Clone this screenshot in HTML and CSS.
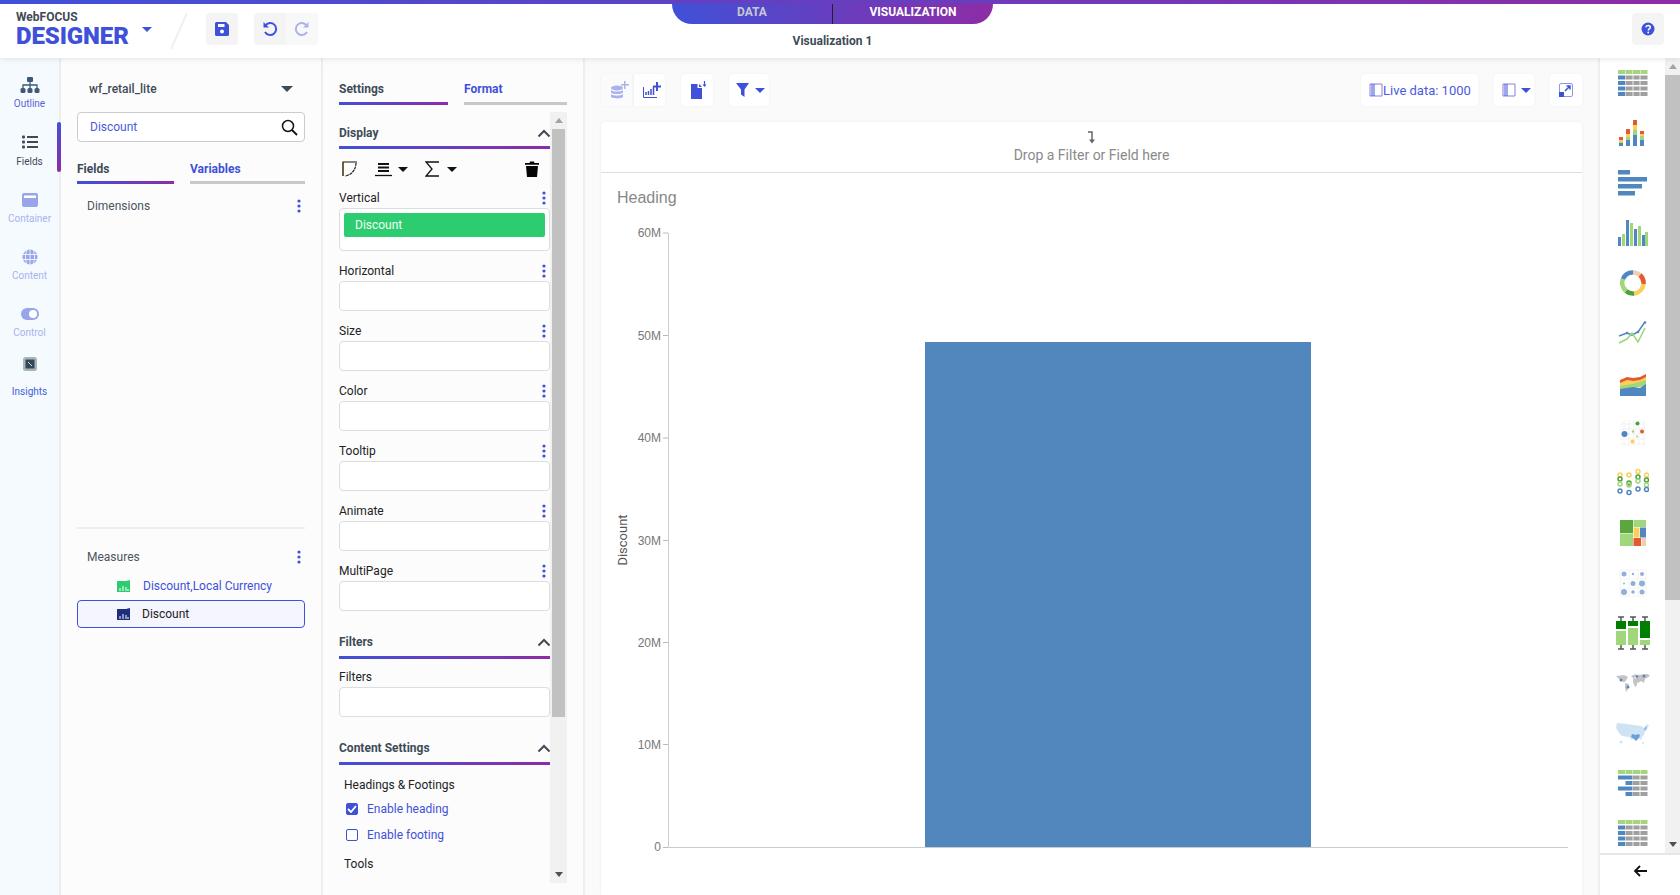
FILE: index.html
```html
<!DOCTYPE html>
<html lang="en">
<head>
<meta charset="utf-8">
<title>WebFOCUS Designer</title>
<link rel="stylesheet" href="styles.css">
</head>
<body>
<svg class="defs" width="0" height="0" aria-hidden="true">
  <defs>
    <symbol id="dots" viewBox="0 0 4 14"><circle cx="2" cy="2" r="1.6"/><circle cx="2" cy="7" r="1.6"/><circle cx="2" cy="12" r="1.6"/></symbol>
    <symbol id="chev" viewBox="0 0 14 9"><path d="M1.5 7.5 7 2l5.500 5.500" fill="none" stroke="#3e4b57" stroke-width="2"/></symbol>
    <symbol id="dropbar" viewBox="0 0 14 14"><path d="M1 1h12v12H1z" fill="none" stroke="#8d7be0"/><path d="M3 1v12M5 1v12" stroke="#3f51d8" stroke-width="1"/></symbol>
  </defs>
</svg>
<div class="app">
  <header class="header">
    <div class="header-line"></div>
    <div class="header-row">
      <div class="header-left">
        <div class="logo">
          <div class="logo-small">WebFOCUS</div>
          <div class="logo-big">DESIGNER</div>
        </div>
        <span class="caret caret-blue logo-caret"></span>
        <svg class="slash" width="18" height="38" viewBox="0 0 18 38"><path d="M17 1 1 37" stroke="#f0f0f0" stroke-width="2"/></svg>
        <div class="btn btn-grey">
          <svg width="14" height="14" viewBox="0 0 14 14"><path d="M1.500 0H11l3 3v9.500a1.500 1.500 0 0 1-1.500 1.500h-11A1.500 1.500 0 0 1 0 12.500v-11A1.500 1.500 0 0 1 1.500 0z" fill="#3f51d8"/><path d="M3 2h6.500v3H3z" fill="#fff"/><circle cx="7" cy="9.500" r="2" fill="#fff"/></svg>
        </div>
        <div class="btn-group">
          <div class="btn btn-grey">
            <svg width="16" height="16" viewBox="0 0 16 16"><path d="M3.300 4.500A6 6 0 1 1 3 11" fill="none" stroke="#3f51d8" stroke-width="2"/><path d="M1.500 1v5.500H7z" fill="#3f51d8"/></svg>
          </div>
          <div class="btn btn-lite">
            <svg width="16" height="16" viewBox="0 0 16 16"><path d="M12.700 4.500A6 6 0 1 0 13 11" fill="none" stroke="#a9b2ec" stroke-width="2"/><path d="M14.500 1v5.500H9z" fill="#a9b2ec"/></svg>
          </div>
        </div>
      </div>
      <div class="header-center">
        <div class="mode-tabs">
          <div class="mode-tab mode-off">DATA</div>
          <div class="mode-tab mode-on">VISUALIZATION</div>
        </div>
        <div class="doc-title">Visualization 1</div>
      </div>
      <div class="header-right">
        <div class="btn btn-grey">
          <svg width="14" height="14" viewBox="0 0 14 14"><circle cx="7" cy="7" r="6.500" fill="#3f51d8"/><path d="M4.800 5.300C5 3.900 6 3.400 7.100 3.400c1.300 0 2.200.8 2.200 1.900 0 1.700-2 1.600-2 3.100" fill="none" stroke="#fff" stroke-width="1.500"/><circle cx="7.200" cy="10.500" r=".9" fill="#fff"/></svg>
        </div>
      </div>
    </div>
  </header>

  <div class="body-row">
    <nav class="rail">
      <div class="rail-item rail-outline">
        <svg class="rail-icon" width="20" height="18" viewBox="0 0 20 18"><g fill="#3f5a78"><rect x="7" y="0" width="6" height="5" rx="1"/><rect x="0.500" y="11" width="5" height="5" rx="1.500"/><rect x="7.500" y="11" width="5" height="5" rx="1.500"/><rect x="14.500" y="11" width="5" height="5" rx="1.500"/></g><path d="M10 5v6M3 11V8h14v3" fill="none" stroke="#3f5a78" stroke-width="1.300"/></svg>
        <span class="rail-label rail-label-blue">Outline</span>
      </div>
      <div class="rail-item rail-active">
        <svg class="rail-icon" width="16" height="14" viewBox="0 0 16 14"><g fill="#3e4b57"><rect x="0" y="0.500" width="3" height="3" rx="1"/><rect x="0" y="5.500" width="3" height="3" rx="1"/><rect x="0" y="10.500" width="3" height="3" rx="1"/><rect x="5" y="1" width="11" height="2"/><rect x="5" y="6" width="11" height="2"/><rect x="5" y="11" width="11" height="2"/></g></svg>
        <span class="rail-label">Fields</span>
      </div>
      <div class="rail-item rail-dim">
        <svg class="rail-icon" width="16" height="14" viewBox="0 0 16 14"><rect width="16" height="14" rx="2" fill="#98a5ea"/><rect x="2" y="2.500" width="12" height="2.500" fill="#fff"/></svg>
        <span class="rail-label">Container</span>
      </div>
      <div class="rail-item rail-dim">
        <svg class="rail-icon" width="16" height="16" viewBox="0 0 16 16"><circle cx="8" cy="8" r="7.500" fill="#98a5ea"/><path d="M0 5.500h16M0 10.500h16M8 0v16M5 1c-2 4-2 10 0 14M11 1c2 4 2 10 0 14" fill="none" stroke="#fff" stroke-width=".8"/></svg>
        <span class="rail-label">Content</span>
      </div>
      <div class="rail-item rail-dim">
        <svg class="rail-icon" width="18" height="12" viewBox="0 0 18 12"><rect width="18" height="12" rx="6" fill="#98a5ea"/><circle cx="12" cy="6" r="4" fill="#fff"/></svg>
        <span class="rail-label">Control</span>
      </div>
      <div class="rail-item rail-insights">
        <svg class="rail-icon" width="14" height="14" viewBox="0 0 14 14"><rect width="14" height="14" rx="2.500" fill="#a9b6b8"/><rect x="2.500" y="2.500" width="9" height="9" fill="#34475a"/><path d="M5 5l4 4" stroke="#d5dde0"/></svg>
        <span class="rail-label rail-label-link">Insights</span>
      </div>
    </nav>

    <section class="fields-panel">
      <div class="source-row">
        <span class="source-name">wf_retail_lite</span>
        <span class="caret caret-dark caret-lg"></span>
      </div>
      <div class="search-box">
        <span class="search-text">Discount</span>
        <svg width="17" height="17" viewBox="0 0 17 17"><circle cx="7" cy="7" r="5.500" fill="none" stroke="#111" stroke-width="1.500"/><path d="M11 11l5 5" stroke="#111" stroke-width="1.800"/></svg>
      </div>
      <div class="tabs tabs-fields">
        <div class="tab tab-on">Fields</div>
        <div class="tab tab-off">Variables</div>
      </div>
      <div class="group-head group-dim">
        <span>Dimensions</span>
        <svg class="dots"><use href="#dots"/></svg>
      </div>
      <div class="group-spacer"></div>
      <div class="group-head group-meas">
        <span>Measures</span>
        <svg class="dots"><use href="#dots"/></svg>
      </div>
      <div class="meas-row">
        <svg width="13" height="12" viewBox="0 0 13 12"><path d="M0 1h9l4-1v12H0z" fill="#2ecc71"/><path d="M3 11V8M6 11V6M9 11V7M11 11V9" stroke="#fff"/></svg>
        <span class="meas-name">Discount,Local Currency</span>
      </div>
      <div class="meas-row meas-selected">
        <svg width="13" height="12" viewBox="0 0 13 12"><path d="M0 1h9l4-1v12H0z" fill="#1e2f7d"/><path d="M3 11V8M6 11V6M9 11V7M11 11V9" stroke="#fff"/></svg>
        <span class="meas-name">Discount</span>
      </div>
    </section>

    <section class="settings-panel">
      <div class="tabs tabs-settings">
        <div class="tab tab-on">Settings</div>
        <div class="tab tab-off">Format</div>
      </div>
      <div class="settings-scroll">
        <div class="settings-content">
          <div class="section-head section-first"><span>Display</span><svg class="chev"><use href="#chev"/></svg></div>
          <div class="display-tools">
            <svg class="tool-curve" width="16" height="16" viewBox="0 0 16 16"><path d="M1 15V1h14" fill="none" stroke="#111" stroke-width="1.200"/><path d="M14 2c0 6-4 12-11 13" fill="none" stroke="#222" stroke-width="1.200" stroke-dasharray="3 .6"/><path d="M1 1v14" stroke="#7a4a1a"/></svg>
            <span class="tool-gap"></span>
            <svg width="17" height="15" viewBox="0 0 17 15"><path d="M3 1h11v2H3zM3 4.500h11v2H3zM3 8h11v2H3z" fill="#111"/><path d="M0 13.500h17" stroke="#111" stroke-width="1.300"/></svg>
            <span class="caret caret-black"></span>
            <span class="tool-gap"></span>
            <svg width="14" height="16" viewBox="0 0 14 16"><path d="M14 1H1l6 7-6 7h13" fill="none" stroke="#111" stroke-width="1.300"/></svg>
            <span class="caret caret-black caret-wide"></span>
            <span class="tool-fill"></span>
            <svg class="trash" width="14" height="16" viewBox="0 0 14 16"><path d="M0 2h4.500l.6-1.500h3.800L9.500 2H14v1.800H0zM1 5h12l-1 11H2z" fill="#050505"/></svg>
          </div>
          <div class="field">
            <div class="field-head"><span>Vertical</span><svg class="dots"><use href="#dots"/></svg></div>
            <div class="drop-box drop-filled"><div class="chip">Discount</div></div>
          </div>
          <div class="field"><div class="field-head"><span>Horizontal</span><svg class="dots"><use href="#dots"/></svg></div><div class="drop-box"></div></div>
          <div class="field"><div class="field-head"><span>Size</span><svg class="dots"><use href="#dots"/></svg></div><div class="drop-box"></div></div>
          <div class="field"><div class="field-head"><span>Color</span><svg class="dots"><use href="#dots"/></svg></div><div class="drop-box"></div></div>
          <div class="field"><div class="field-head"><span>Tooltip</span><svg class="dots"><use href="#dots"/></svg></div><div class="drop-box"></div></div>
          <div class="field"><div class="field-head"><span>Animate</span><svg class="dots"><use href="#dots"/></svg></div><div class="drop-box"></div></div>
          <div class="field"><div class="field-head"><span>MultiPage</span><svg class="dots"><use href="#dots"/></svg></div><div class="drop-box"></div></div>
          <div class="section-head section-filters"><span>Filters</span><svg class="chev"><use href="#chev"/></svg></div>
          <div class="field field-filters"><div class="field-head"><span>Filters</span></div><div class="drop-box"></div></div>
          <div class="section-head section-content"><span>Content Settings</span><svg class="chev"><use href="#chev"/></svg></div>
          <div class="sub-title sub-first">Headings &amp; Footings</div>
          <div class="check-row">
            <span class="check check-on"><svg width="10" height="8" viewBox="0 0 10 8"><path d="M1 4l3 3 5-6" fill="none" stroke="#fff" stroke-width="1.800"/></svg></span>
            <span>Enable heading</span>
          </div>
          <div class="check-row">
            <span class="check"></span>
            <span>Enable footing</span>
          </div>
          <div class="sub-title sub-tools">Tools</div>
        </div>
        <div class="scrollbar scrollbar-settings">
          <span class="sb-arrow sb-up"></span>
          <span class="sb-thumb"></span>
          <span class="sb-fill"></span>
          <span class="sb-arrow sb-down"></span>
        </div>
      </div>
    </section>

    <main class="main">
      <div class="toolbar">
        <div class="tool-group">
          <div class="tbtn tbtn-muted tbtn-shift-more">
            <svg width="18" height="18" viewBox="0 0 18 18"><g fill="#a9b2ec"><ellipse cx="6" cy="7" rx="6" ry="2.500"/><path d="M0 9c2 2 10 2 12 0v2.500c-2 2-10 2-12 0zM0 13c2 2 10 2 12 0v2.500C12 18 0 18 0 15.500z"/><path d="M13 0h1.500v3H18v1.500h-3.500V8H13V4.500H10V3h3z"/></g></svg>
          </div>
          <div class="tbtn tbtn-shift">
            <svg width="18" height="16" viewBox="0 0 18 16"><path d="M.5 5v10.500H14" fill="none" stroke="#3f51d8"/><path d="M3 13V10M5.500 13V9M8 13V7M10.500 13V5" stroke="#3f51d8" stroke-width="1.500"/><path d="M13 0h2v3.500h3v2h-3V9h-2V5.500h-3v-2h3z" fill="#3f51d8"/></svg>
          </div>
        </div>
        <div class="tbtn tbtn-shift">
          <svg width="16" height="18" viewBox="0 0 16 18"><path d="M0 3h6.500v4H11v11H0z" fill="#3f51d8"/><path d="M8 3l3 3H8z" fill="#3f51d8"/><path d="M13.500 0v4" stroke="#3f51d8" stroke-width="1.200"/><path d="M11.500 3.500h4l-2 2.500z" fill="#3f51d8"/></svg>
        </div>
        <div class="tbtn tbtn-wide">
          <svg width="14" height="14" viewBox="0 0 14 14"><path d="M0 0h13L8.500 6.500V14L5 11.500v-5z" fill="#3f51d8"/></svg>
          <span class="caret caret-blue"></span>
        </div>
        <div class="tool-fill"></div>
        <div class="tbtn tbtn-live">
          <svg width="14" height="14"><use href="#dropbar"/></svg>
          <span>Live data: 1000</span>
        </div>
        <div class="tbtn tbtn-wide tbtn-layout">
          <svg width="14" height="14"><use href="#dropbar"/></svg>
          <span class="caret caret-blue"></span>
        </div>
        <div class="tbtn">
          <svg width="14" height="14" viewBox="0 0 14 14"><rect x=".5" y=".5" width="13" height="13" rx="1.500" fill="none" stroke="#8d97e6"/><rect y="9" width="5" height="5" fill="#3f51d8"/><path d="M6 8l5-5M7.500 3H11v3.500" fill="none" stroke="#3f51d8" stroke-width="1.500"/></svg>
        </div>
      </div>
      <div class="card">
        <div class="drop-zone">
          <svg width="8" height="13" viewBox="0 0 8 13"><path d="M0 1h4v10" fill="none" stroke="#666" stroke-width="1.500"/><path d="M1 8.500h6L4 12.500z" fill="#666"/></svg>
          <span>Drop a Filter or Field here</span>
        </div>
        <svg class="chart" width="980" height="723" viewBox="0 0 980 723">
          <text class="chart-heading" x="16" y="30">Heading</text>
          <g class="ticks">
            <path d="M62 60h5M62 162.500h5M62 265h5M62 367.500h5M62 469.500h5M62 571.500h5M62 674.500h5" stroke="#bbb"/>
            <path d="M67.500 60v614.500H967" fill="none" stroke="#ccc"/>
          </g>
          <rect x="324" y="169" width="386" height="505" fill="#5187bd"/>
          <g class="chart-tick">
            <text x="60" y="64">60M</text>
            <text x="60" y="167">50M</text>
            <text x="60" y="269">40M</text>
            <text x="60" y="372">30M</text>
            <text x="60" y="474">20M</text>
            <text x="60" y="576">10M</text>
            <text x="60" y="678">0</text>
          </g>
          <text class="chart-axis" transform="translate(26 367) rotate(-90)">Discount</text>
        </svg>
      </div>
    </main>

    <aside class="types">
      <div class="types-top">
        <div class="types-list">
          <div class="type"><svg width="30" height="26" viewBox="0 0 30 26"><g fill="#a5d67f"><rect width="7" height="4"/><rect x="7.500" width="7" height="4"/><rect x="15" width="7" height="4"/><rect x="22.500" width="7" height="4"/></g><g fill="#5187c0"><rect y="5.500" width="7" height="4"/><rect y="11" width="7" height="4"/><rect y="16.500" width="7" height="4"/><rect y="22" width="7" height="4"/></g><g fill="#a0a0a0"><rect x="7.500" y="5.500" width="22" height="4"/><rect x="7.500" y="11" width="22" height="4"/><rect x="7.500" y="16.500" width="22" height="4"/><rect x="7.500" y="22" width="22" height="4"/></g><path d="M15 5v21M22 5v21" stroke="#fff" stroke-width=".8"/></svg></div>
          <div class="type"><svg width="28" height="26" viewBox="0 0 28 26"><path d="M0 17h4v3H0zM7 9h4v5H7zM14 0h4v5h-4zM21 11h4v3h-4z" fill="#e35a30"/><path d="M0 20h4v2H0zM7 14h4v3H7zM14 5h4v5h-4zM21 14h4v2h-4z" fill="#fbcf5b"/><path d="M0 22h4v1H0zM7 17h4v3H7zM14 10h4v5h-4zM21 16h4v4h-4z" fill="#9fd77a"/><path d="M0 23h4v3H0zM7 20h4v6H7zM14 15h4v11h-4zM21 20h4v6h-4z" fill="#5187c0"/></svg></div>
          <div class="type"><svg width="30" height="26" viewBox="0 0 30 26"><g fill="#5187c0"><rect x="0" y="0" width="12" height="4.500"/><rect x="0" y="7" width="29" height="4.500"/><rect x="0" y="14" width="24" height="4.500"/><rect x="0" y="21" width="17" height="4.500"/></g></svg></div>
          <div class="type"><svg width="30" height="26" viewBox="0 0 30 26"><g fill="#5187c0"><rect x="0" y="17" width="3" height="9"/><rect x="8" y="0" width="3" height="26"/><rect x="16" y="9" width="3" height="17"/><rect x="24" y="15" width="3" height="11"/></g><g fill="#9fd77a"><rect x="4" y="14" width="3" height="12"/><rect x="12" y="3" width="3" height="23"/><rect x="20" y="6" width="3" height="20"/><rect x="27" y="12" width="3" height="14"/></g></svg></div>
          <div class="type"><svg width="26" height="26" viewBox="0 0 26 26"><g fill="none" stroke-width="4.500"><path d="M13 2.500A10.500 10.500 0 0 1 20 5" stroke="#eecfae"/><path d="M20 5A10.500 10.500 0 0 1 23.500 14" stroke="#e35a30"/><path d="M23.500 14A10.500 10.500 0 0 1 14 23.500" stroke="#fbcf5b"/><path d="M14 23.500A10.500 10.500 0 0 1 6 21" stroke="#4ea03f"/><path d="M6 21A10.500 10.500 0 0 1 3 9" stroke="#9fd77a"/><path d="M3 9A10.500 10.500 0 0 1 13 2.500" stroke="#5187c0"/></g></svg></div>
          <div class="type"><svg width="30" height="24" viewBox="0 0 30 24"><path d="M1 15 9 12l5 2 6-3 7-10" fill="none" stroke="#5187c0" stroke-width="1.600"/><path d="M1 22 9 18l5-6 6 9 7-14" fill="none" stroke="#9fd77a" stroke-width="1.600"/><g fill="#5187c0"><circle cx="9" cy="12" r="1.300"/><circle cx="20" cy="11" r="1.300"/><circle cx="27" cy="1.500" r="1.300"/></g></svg></div>
          <div class="type type-area"><svg width="28" height="22" viewBox="0 0 28 22"><path d="M1 6 8 3l6 1 7-1 6-3v7L1 10z" fill="#e35a30"/><path d="M1 9 8 6l6 1 7-1 6-3v6L1 13z" fill="#fbcf5b"/><path d="M1 12 14 10l13-4v6L1 16z" fill="#9fd77a"/><path d="M1 15l13-2 7 1 6-4v12H1z" fill="#5187c0"/></svg></div>
          <div class="type"><svg width="28" height="28" viewBox="0 0 28 28"><path d="M1 5h26M1 10h26M1 15h26M1 20h26M1 25h26M5 1v26M10 1v26M15 1v26M20 1v26M25 1v26" stroke="#f1f1f1"/><circle cx="5.500" cy="15" r="3" fill="#5187c0"/><circle cx="18.500" cy="4.500" r="2" fill="#4ea03f"/><circle cx="23" cy="12.500" r="2" fill="#e35a30"/><circle cx="14" cy="12.500" r="1.300" fill="#9fd77a"/><circle cx="18" cy="17.500" r="1.200" fill="#f0c8a0"/><circle cx="13.500" cy="22.500" r="2" fill="#fbcf5b"/></svg></div>
          <div class="type"><svg width="32" height="28" viewBox="0 0 32 28"><g fill="none" stroke-width="1.500"><g stroke="#fbcf5b"><circle cx="3" cy="6" r="2"/><circle cx="12" cy="6" r="2"/><circle cx="21" cy="2.500" r="2"/><circle cx="29.500" cy="6" r="2"/></g><g stroke="#4ea03f"><circle cx="3" cy="10" r="2"/><circle cx="12" cy="14" r="2"/><circle cx="21" cy="8" r="2"/><circle cx="29.500" cy="11" r="2"/></g><g stroke="#9fd77a"><circle cx="3" cy="15" r="2"/><circle cx="12" cy="16" r="2"/><circle cx="21" cy="12" r="2"/><circle cx="29.500" cy="16" r="2"/></g><g stroke="#5187c0"><circle cx="3" cy="22" r="2"/><circle cx="12" cy="23.500" r="2"/><circle cx="21" cy="20" r="2"/><circle cx="29.500" cy="20.500" r="2"/></g></g></svg></div>
          <div class="type"><svg width="26" height="26" viewBox="0 0 26 26"><rect x="0" y="0" width="13" height="13" fill="#5aa63f"/><rect x="13.500" y="0" width="12.500" height="7" fill="#9fd77a"/><rect x="0" y="13.500" width="13" height="12.500" fill="#9fd77a"/><rect x="13.500" y="7.500" width="6" height="10" fill="#fbcf5b"/><rect x="20" y="7.500" width="6" height="10" fill="#5187c0"/><rect x="13.500" y="18" width="7.500" height="8" fill="#e35a30"/><rect x="21.500" y="18" width="4.500" height="8" fill="#eecfae"/></svg></div>
          <div class="type"><svg width="28" height="28" viewBox="0 0 28 28"><path d="M1 1h26v26H1zM1 10h26M1 19h26M10 1v26M19 1v26" fill="none" stroke="#f3f3f3"/><g fill="#8fb0d8"><circle cx="5" cy="5" r="2.500"/><circle cx="14" cy="5" r="1.200"/><circle cx="23" cy="5" r="2"/><circle cx="5" cy="14.500" r="1"/><circle cx="14" cy="14.500" r="2.500"/><circle cx="23" cy="14.500" r="3"/><circle cx="5" cy="23" r="3"/><circle cx="14" cy="23" r="1.800"/><circle cx="23" cy="23" r="2.500"/></g></svg></div>
          <div class="type"><svg width="34" height="34" viewBox="0 0 34 34"><g fill="#008000"><rect x="0" y="5" width="10" height="8"/><rect x="12" y="5" width="10" height="5"/><rect x="24" y="5" width="10" height="17"/></g><g fill="#9fd77a"><rect x="0" y="15" width="10" height="14"/><rect x="12" y="12" width="10" height="17"/><rect x="24" y="24" width="10" height="5"/></g><path d="M2 1h6M5 1v4M14 1h6M17 1v4M26 1h6M29 1v4M2 33h6M5 29v4M14 33h6M17 29v4M26 33h6M29 29v4" stroke="#555" stroke-width="1.500"/></svg></div>
          <div class="type"><svg width="34" height="20" viewBox="0 0 34 20"><path d="M0 3l8-1 4 2-3 5-2 0-4-3zM9 10l4 1-1 5-2 3-1-4zM15 3l5-2 1 3-4 1zM17 5l5 1-1 6-2 2-2-5zM20 2l12-1 2 2-5 3-1 4-3-2-3 2-2-5z" fill="#c4c4c4"/><g fill="#5187c0"><circle cx="5" cy="7" r="1.500"/><circle cx="12" cy="14" r="1.500"/><circle cx="21" cy="3.500" r="1.200"/><circle cx="28" cy="3" r="1.500"/></g></svg></div>
          <div class="type"><svg width="34" height="23" viewBox="0 0 34 23"><path d="M1 1l10 1 14 2 3 2 3-4 2 1-2 4-2 2-1 4-2 2-1 3-3-3-4 0-2 3-3-3-7-1-3-3-3-5z" fill="#cfe3f2"/><path d="M16 12l4 1 2-1 2 1-1 3-3 3-2-2-3-2z" fill="#6b9fdc"/><path d="M28 7l2-3 1 2-2 3z" fill="#8fb8e6"/><circle cx="5" cy="20" r="1.500" fill="#cfe3f2"/><circle cx="27" cy="21" r="1" fill="#cfe3f2"/></svg></div>
          <div class="type"><svg width="30" height="27" viewBox="0 0 30 27"><g fill="#a5d67f"><rect width="7" height="4"/><rect x="7.500" width="7" height="4"/><rect x="15" width="7" height="4"/><rect x="22.500" width="7" height="4"/></g><g fill="#5187c0"><rect y="5.500" width="14.500" height="4"/><rect x="7.500" y="11" width="7" height="4"/><rect y="16.500" width="14.500" height="4"/><rect x="7.500" y="22" width="7" height="4"/></g><g fill="#a0a0a0"><rect x="15" y="5.500" width="14.500" height="4"/><rect x="15" y="11" width="14.500" height="4"/><rect x="15" y="16.500" width="14.500" height="4"/><rect x="15" y="22" width="14.500" height="4"/></g><path d="M22 5v22" stroke="#fff" stroke-width=".8"/></svg></div>
          <div class="type"><svg width="30" height="26" viewBox="0 0 30 26"><g fill="#a5d67f"><rect width="7" height="4"/><rect x="7.500" width="7" height="4"/><rect x="15" width="7" height="4"/><rect x="22.500" width="7" height="4"/></g><g fill="#5187c0"><rect y="5.500" width="7" height="4"/><rect y="11" width="7" height="4"/><rect y="16.500" width="7" height="4"/><rect y="22" width="7" height="4"/></g><g fill="#a0a0a0"><rect x="7.500" y="5.500" width="22" height="4"/><rect x="7.500" y="11" width="22" height="4"/><rect x="7.500" y="16.500" width="22" height="4"/><rect x="7.500" y="22" width="22" height="4"/></g><path d="M15 5v21M22 5v21" stroke="#fff" stroke-width=".8"/></svg></div>
        </div>
        <div class="scrollbar scrollbar-types">
          <span class="sb-arrow sb-up"></span>
          <span class="sb-thumb"></span>
          <span class="sb-fill"></span>
          <span class="sb-arrow sb-down"></span>
        </div>
      </div>
      <div class="types-foot">
        <svg width="14" height="12" viewBox="0 0 14 12"><path d="M14 6H2M7 1 2 6l5 5" fill="none" stroke="#111" stroke-width="1.800"/></svg>
      </div>
    </aside>
  </div>
</div>
</body>
</html>
```

FILE: styles.css
```css
* { box-sizing: border-box; }
html, body { margin: 0; height: 100%; overflow: hidden; }
body { font-family: Roboto, "Liberation Sans", sans-serif; font-size: 12px; color: #3e4b57; background: #fff; }
svg { display: block; flex: none; }
.defs { position: absolute; }
.app { display: flex; flex-direction: column; width: 1680px; height: 895px; }

/* header */
.header { height: 58px; flex: none; background: #fff; box-shadow: 0 1px 6px rgba(0,0,0,.1); position: relative; z-index: 2; }
.header-line { height: 4px; background: linear-gradient(90deg, #3f51d8, #8e2ca6); }
.header-row { display: grid; grid-template-columns: 672px 321px 1fr; height: 54px; }
.header-left { display: flex; align-items: flex-start; padding-left: 16px; }
.logo { width: 125px; margin-top: 8px; }
.logo-small { font-size: 12px; font-weight: 700; line-height: 11px; color: #3e4b57; }
.logo-big { font-size: 24px; font-weight: 900; line-height: 24px; color: #3f51d8; letter-spacing: -.1px; margin-top: 1px; }
.logo-caret { margin: 23px 0 0 1px; border-width: 3px 4px 0; }
.slash { margin: 8px 18px 0 18px; }
.btn { width: 32px; height: 32px; display: flex; align-items: center; justify-content: center; border-radius: 4px; }
.header-left .btn, .btn-group { margin-top: 9px; }
.btn-group .btn { margin-top: 0; }
.btn-grey { background: #f4f4f5; }
.btn-lite { background: #f8f8f9; }
.btn-group { display: flex; margin-left: 16px; }
.btn-group .btn:first-child { border-radius: 4px 0 0 4px; }
.btn-group .btn:last-child { border-radius: 0 4px 4px 0; }
.header-center { display: flex; flex-direction: column; align-items: center; }
.mode-tabs { display: flex; width: 321px; height: 20px; border-radius: 0 0 24px 24px; background: linear-gradient(90deg, #3f51d8, #8e2ca6); overflow: hidden; }
.mode-tab { height: 20px; line-height: 16px; text-align: center; font-size: 12px; font-weight: 700; }
.mode-off { width: 161px; color: #c8c8d0; border-right: 1px solid #222; }
.mode-on { width: 160px; color: #fff; }
.doc-title { margin-top: 9px; font-size: 12px; font-weight: 700; line-height: 16px; color: #3e4b57; }
.header-right { display: flex; justify-content: flex-end; padding: 9px 16px 0 0; }

/* layout */
.body-row { flex: 1; min-height: 0; display: flex; }

/* rail */
.rail { width: 61px; flex: none; background: #f5faff; border-right: 2px solid #eee; padding-top: 18px; display: flex; flex-direction: column; }
.rail-item { height: 57px; display: flex; flex-direction: column; align-items: center; position: relative; width: 59px; }
.rail-icon { height: 20px; }
.rail-label { margin-top: 3px; font-size: 10px; line-height: 12px; color: #3e4b57; }
.rail-outline .rail-label { margin-top: 2px; }
.rail-label-blue { color: #5a63d8; }
.rail-dim .rail-label { color: #a9b2ec; }
.rail-label-link { color: #3f62d8; }
.rail-active .rail-icon { margin-top: -1px; }
.rail-active .rail-label { margin-top: 4px; }
.rail-insights .rail-icon { margin-top: -7px; }
.rail-insights .rail-label { margin-top: 12px; }
.rail-active::after { content: ""; position: absolute; right: -2px; top: -11px; width: 4px; height: 50px; border-radius: 2px; background: linear-gradient(180deg, #3f51d8, #8e2ca6); }

/* fields panel */
.fields-panel { width: 262px; flex: none; background: #fcfcfd; border-right: 2px solid #eee; padding: 0 16px; display: flex; flex-direction: column; }
.source-row { display: flex; align-items: center; justify-content: space-between; height: 20px; margin-top: 21px; padding: 0 12px 0 12px; }
.source-name { font-size: 12px; font-weight: 500; color: #3e4b57; }
.caret { display: inline-block; width: 0; height: 0; border-style: solid; border-color: transparent; border-width: 5px 5px 0; flex: none; }
.caret-blue { border-top-color: #3f51d8; }
.caret-black { border-top-color: #111; }
.caret-dark { border-top-color: #3e4b57; }
.caret-lg { border-width: 6px 6px 0; }
.search-box { display: flex; align-items: center; justify-content: space-between; height: 30px; margin-top: 13px; padding: 0 6px 0 12px; background: #fff; border: 1px solid #ccc; border-radius: 4px; }
.search-text { font-size: 12px; color: #4a5ae0; }
.tabs { display: flex; }
.tab { font-size: 12px; font-weight: 700; line-height: 16px; padding-bottom: 5px; border-bottom: 3px solid #c8c8c8; }
.tab-on { color: #3e4b57; border-image: linear-gradient(90deg, #3f51d8, #8e2ca6) 1; }
.tab-off { color: #3f51d8; }
.tabs-fields { margin-top: 19px; gap: 16px; }
.tabs-fields .tab { padding-bottom: 4px; }
.tabs-fields .tab-on { width: 97px; }
.tabs-fields .tab-off { width: 115px; }
.group-head { display: flex; align-items: center; justify-content: space-between; font-size: 12px; line-height: 16px; color: #4a5560; padding: 0 4px 0 10px; }
.dots { width: 4px; height: 14px; fill: #3f51d8; }
.group-dim { margin-top: 14px; }
.group-spacer { height: 315px; border-bottom: 2px solid #eee; }
.group-meas { margin-top: 20px; }
.meas-row { display: flex; align-items: center; height: 28px; padding-left: 40px; gap: 13px; }
.group-meas + .meas-row { margin-top: 7px; }
.meas-name { color: #3f51d8; font-size: 12px; }
.meas-selected { background: #f5f5ff; border: 1px solid #3f51d8; border-radius: 4px; padding-left: 39px; gap: 12px; margin-top: 0; }
.meas-selected .meas-name { color: #222; }

/* settings panel */
.settings-panel { width: 262px; flex: none; background: #fcfcfd; border-right: 2px solid #eee; padding: 0 16px; display: flex; flex-direction: column; }
.tabs-settings { margin-top: 23px; gap: 16px; }
.tabs-settings .tab-on { width: 109px; }
.tabs-settings .tab-off { width: 103px; }
.settings-scroll { flex: none; height: 771px; margin-top: 7px; display: flex; width: 228px; overflow: hidden; }
.settings-content { width: 211px; flex: none; }
.section-head { display: flex; align-items: center; justify-content: space-between; height: 18px; font-size: 12px; font-weight: 700; color: #3e4b57; border-bottom: 3px solid; border-image: linear-gradient(90deg, #3f51d8, #8e2ca6) 1; box-sizing: content-box; padding-bottom: 4px; }
.section-first { margin-top: 12px; }
.section-filters { margin-top: 13px; padding-bottom: 5px; }
.chev { width: 14px; height: 9px; margin-right: -1px; }
.display-tools { display: flex; align-items: center; height: 30px; margin-top: 5px; }
.tool-curve { margin-left: 3px; }
.tool-gap { width: 17px; }
.display-tools .caret-black { margin-left: 6px; }
.display-tools .caret-wide { margin-left: 8px; }
.tool-fill { flex: 1; }
.trash { margin-right: 11px; }
.field { padding-bottom: 9px; }
.display-tools + .field { margin-top: 3px; }
.field-head { display: flex; align-items: center; justify-content: space-between; height: 21px; font-size: 12px; color: #222; padding-right: 4px; }
.drop-box { height: 30px; background: #fff; border: 1px solid #ddd; border-radius: 4px; }
.drop-filled { height: 43px; padding: 4px; }
.chip { height: 24px; line-height: 24px; padding-left: 11px; background: #2ecc71; color: #f4fff4; font-size: 12px; border-radius: 2px; }
.field-filters { padding-bottom: 0; margin-top: 7px; }
.section-content { margin-top: 22px; padding-bottom: 5px; }
.sub-title { font-size: 12px; color: #222; line-height: 16px; padding-left: 5px; }
.sub-first { margin-top: 12px; }
.sub-tools { margin-top: 13px; }
.check-row { display: flex; align-items: center; height: 16px; margin-top: 8px; color: #3f51d8; font-size: 12px; gap: 9px; padding-left: 7px; }
.check-row + .check-row { margin-top: 10px; }
.check { width: 12px; height: 12px; border: 1px solid #3f51d8; border-radius: 2px; display: flex; align-items: center; justify-content: center; background: #fff; }
.check-on { background: #3f51d8; }

/* scrollbars */
.scrollbar { display: flex; flex-direction: column; align-items: center; background: #f1f1f1; flex: none; }
.scrollbar-settings { width: 17px; }
.sb-arrow { flex: none; height: 17px; width: 100%; position: relative; }
.sb-arrow::after { content: ""; position: absolute; left: 50%; top: 6px; margin-left: -4px; border-style: solid; border-color: transparent; }
.sb-up::after { border-width: 0 4px 5px; border-bottom-color: #a3a3a3; }
.sb-down::after { border-width: 5px 4px 0; border-top-color: #505050; }
.sb-thumb { display: block; flex: none; width: 13px; background: #c1c1c1; }
.scrollbar-settings .sb-thumb { height: 588px; }
.scrollbar-types { width: 15px; }
.scrollbar-types .sb-thumb { height: 525px; width: 15px; }
.sb-fill { flex: 1; }

/* main */
.main { flex: 1; min-width: 0; background: #fafafa; padding: 16px 16px 0; display: flex; flex-direction: column; }
.toolbar { display: flex; gap: 16px; align-items: flex-start; height: 32px; flex: none; }
.tool-group { display: flex; }
.tbtn { width: 32px; height: 32px; background: #fff; border-radius: 4px; display: flex; align-items: center; justify-content: center; box-shadow: 0 0 3px rgba(0,0,0,.05); }
.tbtn-shift { padding-left: 4px; }
.tbtn-shift-more { padding-left: 5px; }
.tool-group .tbtn:first-child { border-radius: 4px 0 0 4px; background: #fbfbfc; }
.tool-group .tbtn:last-child { border-radius: 0 4px 4px 0; border-left: 1px solid #f2f2f2; }
.tbtn-wide { width: 40px; gap: 5px; justify-content: flex-start; padding-left: 7px; }
.tbtn-layout { padding-left: 8px; }
.tbtn-live { width: 117px; color: #4a5ae0; font-size: 13px; justify-content: flex-start; padding-left: 8px; }
.card { flex: 1; margin-top: 16px; background: #fff; border-radius: 4px 4px 0 0; box-shadow: 0 0 3px rgba(0,0,0,.07); min-height: 0; overflow: hidden; }
.drop-zone { height: 51px; border-bottom: 1px solid #ddd; display: flex; flex-direction: column; align-items: center; padding-top: 9px; color: #8a8a8a; font-size: 14px; line-height: 18px; gap: 2px; }
.chart-heading { font-family: "Liberation Sans", sans-serif; font-size: 16px; fill: #888; }
.chart-tick text { font-family: "Liberation Sans", sans-serif; font-size: 12px; fill: #777; text-anchor: end; }
.chart-axis { font-family: Roboto, sans-serif; font-size: 13px; fill: #555; text-anchor: middle; }

/* chart type rail */
.types { width: 82px; flex: none; background: #fff; border-left: 2px solid #eee; display: flex; flex-direction: column; }
.types-top { height: 795px; flex: none; display: flex; }
.types-list { flex: 1; min-width: 0; overflow: hidden; }
.type { height: 50px; display: flex; align-items: center; justify-content: center; }
.type-area { padding-top: 3px; }
.types-foot { flex: 1; border-top: 2px solid #e6e6e6; display: flex; align-items: center; justify-content: center; padding-bottom: 8px; }
```
